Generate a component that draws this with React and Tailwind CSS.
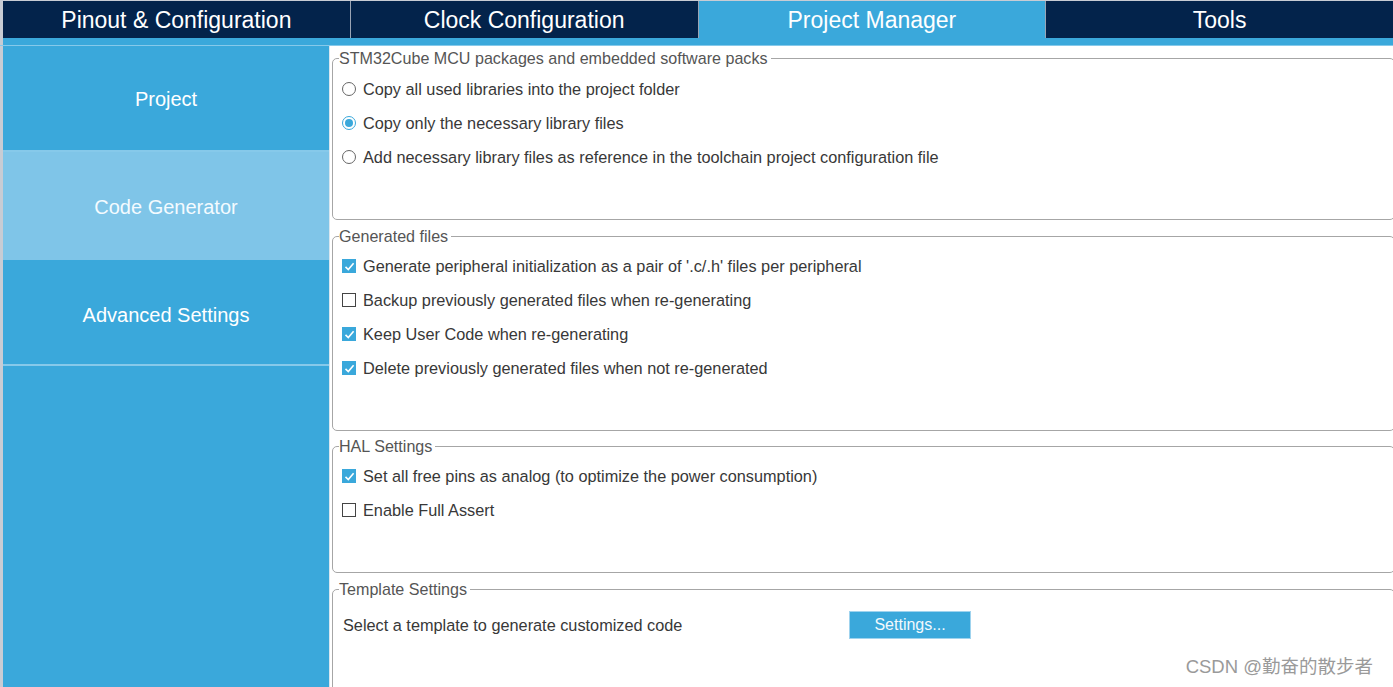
import React from "react";

const tabs = ["Pinout & Configuration", "Clock Configuration", "Project Manager", "Tools"];

const Radio = ({ checked, label }) => (
  <div className="h-[34px] flex items-center gap-[7px]">
    <span
      className={`w-[14px] h-[14px] shrink-0 rounded-full border flex items-center justify-center bg-white ${
        checked ? "border-[#3aa8db]" : "border-[#666]"
      }`}
    >
      {checked && <span className="w-[8px] h-[8px] rounded-full bg-[#3aa8db]" />}
    </span>
    <span>{label}</span>
  </div>
);

const Check = ({ checked, label }) => (
  <div className="h-[34px] flex items-center gap-[7px]">
    {checked ? (
      <span className="w-[14px] h-[14px] shrink-0 bg-[#3aa8db] flex items-center justify-center">
        <svg width="11" height="11" viewBox="0 0 11 11">
          <path d="M1.5 5.8 L4.3 8.5 L9.6 2.3" fill="none" stroke="#fff" strokeWidth="1.6" />
        </svg>
      </span>
    ) : (
      <span className="w-[14px] h-[14px] shrink-0 border border-[#444] bg-white" />
    )}
    <span>{label}</span>
  </div>
);

const Group = ({ title, className, children }) => (
  <fieldset className={`shrink-0 border border-[#a6a6a6] rounded-[5px] px-[9px] -mr-[2px] ${className}`}>
    <legend className="-ml-[3px] pr-[3px] leading-[17px] text-[16.1px] text-[#555]">{title}</legend>
    {children}
  </fieldset>
);

const App = () => {
  return (
    <div
      className="w-[1393px] h-[687px] overflow-hidden bg-white flex flex-col text-[16.3px] text-[#383838]"
      style={{ fontFamily: '"Liberation Sans", Arial, "Noto Sans CJK SC", sans-serif' }}
    >
      {/* Top tabs */}
      <div className="h-[38px] shrink-0 flex border-t border-l-[3px] border-[#c8ccd4] bg-[#03234b]">
        {tabs.map((t, i) => (
          <div
            key={t}
            className={`flex-1 flex items-center justify-center pt-[1px] text-white text-[23px] ${
              i > 0 ? "border-l border-[#9aa4b4]" : ""
            } ${t === "Project Manager" ? "bg-[#3aa8db]" : ""}`}
          >
            {t}
          </div>
        ))}
      </div>
      <div className="h-[7px] shrink-0 bg-[#3aa8db] border-l-[3px] border-[#c8ccd4]" />
      <div className="h-px shrink-0 bg-[#86c9ea]" />

      <div className="flex-1 flex min-h-0">
        {/* Sidebar */}
        <div className="w-[330px] shrink-0 border-l-[3px] border-[#c8ccd4] bg-[#3aa8db] flex flex-col text-white text-[20px] border-r border-r-[#d8e6ef]">
          <div className="h-[104px] pt-[2px] flex items-center justify-center">Project</div>
          <div className="h-[2px] bg-[#86c9ea]" />
          <div className="h-[108px] pt-[2px] flex items-center justify-center bg-[#7fc5e8] text-[#f4fbff]">Code Generator</div>
          <div className="h-[104px] pt-[5px] flex items-center justify-center">Advanced Settings</div>
          <div className="h-[2px] bg-[#86c9ea]" />
          <div className="flex-1" />
        </div>

        {/* Content */}
        <div className="flex-1 min-h-0 overflow-hidden pl-[2px] pt-[4px] flex flex-col">
          <Group title="STM32Cube MCU packages and embedded software packs" className="h-[170px]">
            <div className="pt-[5px]">
              <Radio label="Copy all used libraries into the project folder" />
              <Radio checked label="Copy only the necessary library files" />
              <Radio label="Add necessary library files as reference in the toolchain project configuration file" />
            </div>
          </Group>

          <Group title="Generated files" className="h-[203px] mt-[8px]">
            <div className="pt-[4px]">
              <Check checked label="Generate peripheral initialization as a pair of '.c/.h' files per peripheral" />
              <Check label="Backup previously generated files when re-generating" />
              <Check checked label="Keep User Code when re-generating" />
              <Check checked label="Delete previously generated files when not re-generated" />
            </div>
          </Group>

          <Group title="HAL Settings" className="h-[135px] mt-[7px]">
            <div className="pt-[4px]">
              <Check checked label="Set all free pins as analog (to optimize the power consumption)" />
              <Check label="Enable Full Assert" />
            </div>
          </Group>

          <Group title="Template Settings" className="h-[140px] mt-[8px]">
            <div className="pt-[10px] flex items-center h-[44px]">
              <span className="w-[507px] pl-px">Select a template to generate customized code</span>
              <button className="w-[122px] h-[28px] bg-[#3aa8db] border border-[#9fd3ee] text-[#f2f9fd] text-[16px]">
                Settings...
              </button>
            </div>
            <div className="flex justify-end pr-[12px] pt-[14px]">
              <span className="text-[18.5px] leading-[22px] text-[#9a9a9a]">CSDN @勤奋的散步者</span>
            </div>
          </Group>
        </div>
      </div>
    </div>
  );
};

export default App;
